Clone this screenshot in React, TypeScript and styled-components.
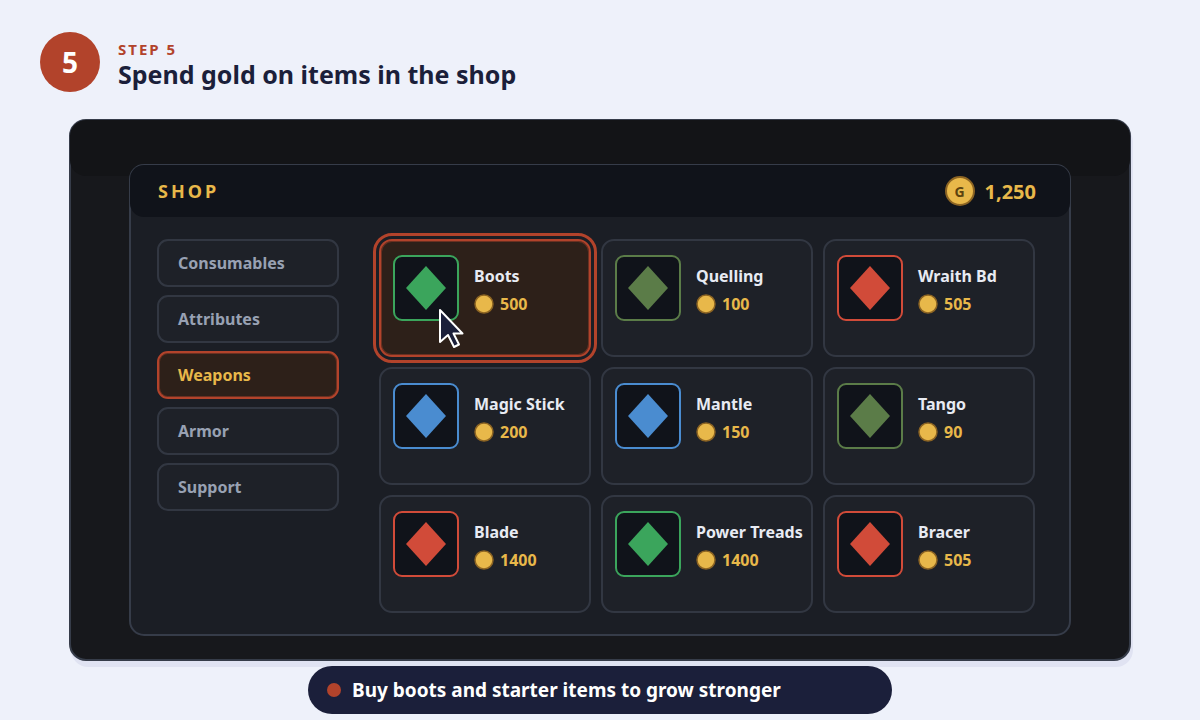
import React, { useState } from "react";
import styled, { createGlobalStyle } from "styled-components";

const GlobalStyle = createGlobalStyle`
  * { box-sizing: border-box; }
  body {
    margin: 0;
    background: #eef1fa;
    font-family: "Noto Sans", "Liberation Sans", sans-serif;
    font-weight: 700;
  }
  button { font: inherit; text-align: left; cursor: pointer; }
`;

const Page = styled.main`
  padding: 32px 40px 6px;
`;

const Header = styled.header`
  display: flex;
  align-items: center;
  gap: 18px;
`;

const StepBadge = styled.div`
  display: grid;
  place-items: center;
  flex: none;
  width: 60px;
  height: 60px;
  border-radius: 50%;
  background: #b2432b;
  color: #ffffff;
  font-size: 28px;
`;

const Heading = styled.div`
  padding-top: 4px;
`;

const StepLabel = styled.p`
  margin: 0;
  color: #b2432b;
  font-size: 15px;
  line-height: 20px;
  letter-spacing: 2px;
`;

const Title = styled.h1`
  margin: 0;
  color: #1b1f3a;
  font-size: 25px;
  line-height: 30px;
  font-weight: 700;
`;

const Frame = styled.section`
  margin: 27px 29px 0;
  padding-bottom: 23px;
  border: 2px solid #363c49;
  border-radius: 17px;
  background: #17181c;
  box-shadow: 2px 6px 0 #e0e3f2;
`;

const FrameTop = styled.div`
  height: 56px;
  margin: -1px -1px 0;
  border-radius: 16px;
  background: #131417;
`;

const Panel = styled.div`
  position: relative;
  margin: -12px 58px 0;
  border: 2px solid #363c49;
  border-radius: 15px;
  background: #1b1e25;
`;

const PanelHeader = styled.div`
  display: flex;
  align-items: center;
  justify-content: space-between;
  height: 52px;
  margin: -1px -1px 0;
  padding: 0 34px 0 28px;
  border-radius: 14px;
  background: #10131a;
  color: #e8b84a;
`;

const PanelTitle = styled.h2`
  margin: 0;
  font-size: 18px;
  font-weight: 700;
  letter-spacing: 3px;
`;

const Balance = styled.div`
  display: flex;
  align-items: center;
  gap: 10px;
  font-size: 20px;
`;

const GoldCoin = styled.span`
  display: grid;
  place-items: center;
  width: 30px;
  height: 30px;
  border: 2px solid #8c6423;
  border-radius: 50%;
  background: #e8b84a;
  color: #5c430f;
  font-size: 14px;
`;

const PanelBody = styled.div`
  display: flex;
  gap: 40px;
  padding: 22px 34px 21px 26px;
`;

const Categories = styled.nav`
  display: flex;
  flex: none;
  flex-direction: column;
  gap: 8px;
  width: 182px;
`;

const Category = styled.button<{ $active: boolean }>`
  height: 48px;
  padding: 0 19px;
  border: 2px solid ${(p) => (p.$active ? "#b2432b" : "#323742")};
  border-radius: 11px;
  box-shadow: ${(p) => (p.$active ? "inset 0 0 0 1px #6a3021" : "none")};
  background: ${(p) => (p.$active ? "#2d2019" : "#1e2128")};
  color: ${(p) => (p.$active ? "#e8b84a" : "#98a1b3")};
  font-size: 16px;
`;

const Items = styled.div`
  display: grid;
  flex: 1;
  grid-template-columns: repeat(3, minmax(0, 1fr));
  gap: 10px;
`;

const ItemCard = styled.button<{ $active: boolean }>`
  position: relative;
  display: flex;
  align-items: flex-start;
  gap: 15px;
  height: 118px;
  padding: 14px 0 0 12px;
  border: 2px solid ${(p) => (p.$active ? "#b2432b" : "#323742")};
  border-radius: 13px;
  box-shadow: ${(p) => (p.$active ? "inset 0 0 0 1px #6a3021" : "none")};
  outline: ${(p) => (p.$active ? "3px solid #b2432b" : "none")};
  outline-offset: 3px;
  background: ${(p) => (p.$active ? "#2d2019" : "#1e2128")};
`;

const ItemTile = styled.span<{ $color: string }>`
  display: grid;
  place-items: center;
  flex: none;
  width: 66px;
  height: 66px;
  border: 2px solid ${(p) => p.$color};
  border-radius: 9px;
  background: #10131a;
`;

const ItemText = styled.span`
  display: flex;
  flex-direction: column;
  gap: 4px;
  padding-top: 9px;
  white-space: nowrap;
`;

const ItemName = styled.span`
  color: #e8ebf3;
  font-size: 16px;
  line-height: 24px;
`;

const Price = styled.span`
  display: flex;
  align-items: center;
  gap: 6px;
  color: #e8b84a;
  font-size: 16px;
  line-height: 24px;
`;

const Pointer = styled.svg`
  position: absolute;
  top: 66px;
  left: 56px;
  pointer-events: none;
`;

const Caption = styled.p`
  display: flex;
  align-items: center;
  gap: 11px;
  max-width: 584px;
  height: 48px;
  margin: 5px auto 0;
  padding: 0 19px;
  position: relative;
  border-radius: 24px;
  background: #1b1f3a;
  color: #ffffff;
  font-size: 19px;
`;

const Dot = styled.span`
  flex: none;
  width: 14px;
  height: 14px;
  border-radius: 50%;
  background: #b2432b;
`;

const categories = ["Consumables", "Attributes", "Weapons", "Armor", "Support"];

const GREEN = "#3ba55c";
const OLIVE = "#5b7c48";
const RED = "#d14b39";
const BLUE = "#4a8cd0";

const items = [
  { name: "Boots", price: 500, color: GREEN },
  { name: "Quelling", price: 100, color: OLIVE },
  { name: "Wraith Bd", price: 505, color: RED },
  { name: "Magic Stick", price: 200, color: BLUE },
  { name: "Mantle", price: 150, color: BLUE },
  { name: "Tango", price: 90, color: OLIVE },
  { name: "Blade", price: 1400, color: RED },
  { name: "Power Treads", price: 1400, color: GREEN },
  { name: "Bracer", price: 505, color: RED },
];

function Gem({ color }: { color: string }) {
  return (
    <svg width="40" height="44" viewBox="0 0 40 44" aria-hidden="true">
      <path d="M20 0 40 22 20 44 0 22Z" fill={color} />
    </svg>
  );
}

function PriceCoin() {
  return (
    <svg width="20" height="20" viewBox="0 0 20 20" aria-hidden="true">
      <circle cx="10" cy="10" r="9" fill="#e8b84a" stroke="#8c6423" strokeWidth="1.5" />
    </svg>
  );
}

function Cursor() {
  return (
    <Pointer width="30" height="42" viewBox="0 0 30 42" aria-hidden="true">
      <path
        d="M3 3V35L11 28L17 40L22 37.500L16.500 26.500H25.500Z"
        fill="#1b1f3a"
        stroke="#ffffff"
        strokeWidth="2"
        strokeLinejoin="round"
      />
    </Pointer>
  );
}

export default function App() {
  const [category, setCategory] = useState("Weapons");
  const [selected, setSelected] = useState("Boots");

  return (
    <Page>
      <GlobalStyle />
      <Header>
        <StepBadge>5</StepBadge>
        <Heading>
          <StepLabel>STEP 5</StepLabel>
          <Title>Spend gold on items in the shop</Title>
        </Heading>
      </Header>
      <Frame>
        <FrameTop />
        <Panel>
          <PanelHeader>
            <PanelTitle>SHOP</PanelTitle>
            <Balance>
              <GoldCoin>G</GoldCoin>
              1,250
            </Balance>
          </PanelHeader>
          <PanelBody>
            <Categories>
              {categories.map((name) => (
                <Category
                  key={name}
                  type="button"
                  $active={name === category}
                  aria-pressed={name === category}
                  onClick={() => setCategory(name)}
                >
                  {name}
                </Category>
              ))}
            </Categories>
            <Items>
              {items.map((item) => (
                <ItemCard
                  key={item.name}
                  type="button"
                  $active={item.name === selected}
                  aria-pressed={item.name === selected}
                  onClick={() => setSelected(item.name)}
                >
                  <ItemTile $color={item.color}>
                    <Gem color={item.color} />
                  </ItemTile>
                  <ItemText>
                    <ItemName>{item.name}</ItemName>
                    <Price>
                      <PriceCoin />
                      {item.price}
                    </Price>
                  </ItemText>
                  {item.name === selected && <Cursor />}
                </ItemCard>
              ))}
            </Items>
          </PanelBody>
        </Panel>
      </Frame>
      <Caption>
        <Dot />
        Buy boots and starter items to grow stronger
      </Caption>
    </Page>
  );
}
